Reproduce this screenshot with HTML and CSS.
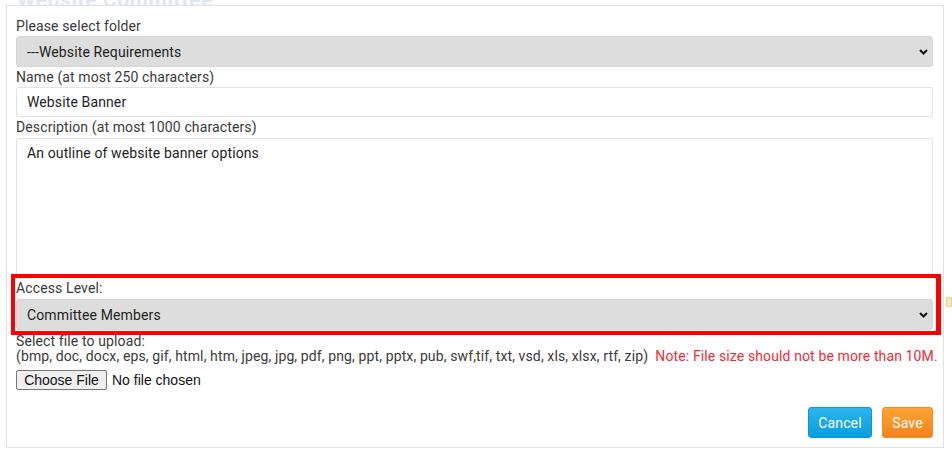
FILE: index.html
```html
<!DOCTYPE html>
<html lang="en">
<head>
<meta charset="utf-8">
<title>Add Document</title>
<link rel="stylesheet" href="styles.css">
</head>
<body>
<div class="page">
  <h1 class="page-title">Website Committee</h1>
  <div class="side-marker"></div>
</div>

<div class="modal">
  <form class="form">
    <label class="label">Please select folder</label>
    <div class="select">
      <span>---Website Requirements</span>
      <svg class="chevron" width="9" height="6" viewBox="0 0 9 6"><path d="M1 1 L4.5 4.5 L8 1" fill="none" stroke="#111" stroke-width="2"/></svg>
    </div>

    <label class="label">Name (at most 250 characters)</label>
    <div class="input">Website Banner</div>

    <label class="label">Description (at most 1000 characters)</label>
    <div class="textarea">An outline of website banner options</div>

    <label class="label">Access Level:</label>
    <div class="select select-gap">
      <span>Committee Members</span>
      <svg class="chevron" width="9" height="6" viewBox="0 0 9 6"><path d="M1 1 L4.5 4.5 L8 1" fill="none" stroke="#111" stroke-width="2"/></svg>
    </div>

    <div class="upload">
      <div class="upload-line">Select file to upload:</div>
      <div class="upload-line">(bmp, doc, docx, eps, gif, html, htm, jpeg, jpg, pdf, png, ppt, pptx, pub, swf,tif, txt, vsd, xls, xlsx, rtf, zip)&nbsp; <span class="note">Note: File size should not be more than 10M.</span></div>
      <div class="file-row">
        <span class="file-btn">Choose File</span>
        <span class="file-name">No file chosen</span>
      </div>
    </div>

    <div class="actions">
      <span class="btn btn-cancel">Cancel</span>
      <span class="btn btn-save">Save</span>
    </div>
  </form>
  <div class="highlight"></div>
</div>
</body>
</html>
```

FILE: styles.css
```css
html, body {
  margin: 0;
  padding: 0;
  background: #ffffff;
  width: 952px;
  height: 455px;
  overflow: hidden;
  font-family: Roboto, "Liberation Sans", Arial, sans-serif;
}

.page {
  position: relative;
  height: 455px;
}

.page-title {
  margin: 0;
  padding: 0 0 0 17px;
  position: relative;
  top: -12px;
  font-size: 21px;
  font-weight: 700;
  color: #dfe7f0;
  line-height: 24px;
  letter-spacing: 0.6px;
}

.side-marker {
  position: absolute;
  left: 946px;
  top: 297px;
  width: 6px;
  height: 10px;
  background: #f7e9b5;
  border: 1px solid #e3d39a;
  box-sizing: border-box;
}

.modal {
  position: absolute;
  left: 6px;
  top: 5px;
  width: 938px;
  height: 443px;
  box-sizing: border-box;
  background: #ffffff;
  border: 1px solid #e2e2e2;
  padding: 10px 10px 9px 9px;
}

.form {
  display: flex;
  flex-direction: column;
  height: 100%;
  letter-spacing: 0.12px;
}

.label {
  display: block;
  font-size: 14px;
  line-height: 20px;
  color: #3a3a3a;
}

.select {
  position: relative;
  display: flex;
  align-items: center;
  height: 31px;
  box-sizing: border-box;
  background: #dddddd;
  border: 1px solid #d6d6d6;
  border-radius: 3px;
  padding: 0 10px;
  font-size: 14px;
  color: #1e1e1e;
}

.select-gap {
  margin-top: 1px;
}

.chevron {
  position: absolute;
  right: 4px;
  top: 12px;
}

.input {
  display: flex;
  align-items: center;
  height: 30px;
  box-sizing: border-box;
  border: 1px solid #e3e3e3;
  border-radius: 2px;
  padding: 0 10px;
  font-size: 14px;
  color: #1e1e1e;
}

.textarea {
  margin-top: 1px;
  height: 140px;
  box-sizing: border-box;
  border: 1px solid #e3e3e3;
  border-radius: 2px;
  padding: 4px 10px;
  font-size: 14px;
  line-height: 20px;
  color: #1e1e1e;
}

.upload {
  margin-top: 4px;
  font-size: 14px;
  line-height: 15px;
  color: #3a3a3a;
}

.upload-line {
  white-space: nowrap;
}

.note {
  color: #ef2b3b;
}

.file-row {
  margin-top: 6px;
  display: flex;
  align-items: center;
  gap: 5px;
  font-family: "Liberation Sans", Arial, sans-serif;
  font-size: 14px;
  letter-spacing: 0;
  color: #111;
}

.file-btn {
  display: inline-flex;
  align-items: center;
  justify-content: center;
  height: 20px;
  box-sizing: border-box;
  width: 91px;
  background: #efefef;
  border: 1px solid #767676;
  border-radius: 2px;
  color: #111;
}

.actions {
  margin-top: auto;
  display: flex;
  justify-content: flex-end;
  gap: 10px;
}

.btn {
  display: inline-flex;
  align-items: center;
  justify-content: center;
  height: 31px;
  box-sizing: border-box;
  padding: 0 10px;
  border-radius: 3px;
  font-size: 14px;
  color: #ffffff;
}

.btn-cancel {
  width: 64px;
  background: linear-gradient(#2cb3ef, #099fdf);
  border: 1px solid #0b98d5;
}

.btn-save {
  width: 51px;
  background: linear-gradient(#fba436, #f4821d);
  border: 1px solid #f28a22;
}

.highlight {
  position: absolute;
  left: 4px;
  top: 268px;
  width: 930px;
  height: 61px;
  box-sizing: border-box;
  border: 4px solid #ff0000;
  border-right-width: 5px;
  pointer-events: none;
}
```
